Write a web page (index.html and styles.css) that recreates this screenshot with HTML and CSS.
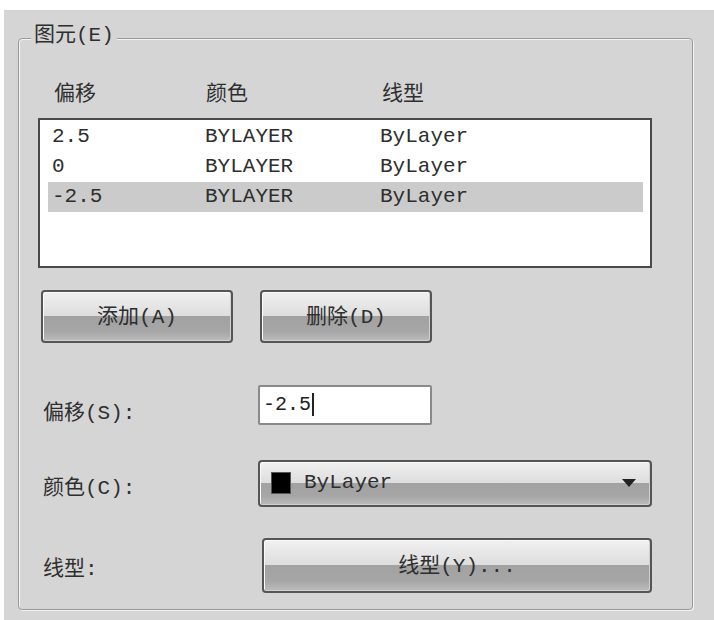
FILE: index.html
```html
<!DOCTYPE html>
<html lang="zh-CN">
<head>
<meta charset="utf-8">
<title>图元</title>
<link rel="stylesheet" href="styles.css">
</head>
<body>
<div class="page">
  <div class="dialog">
    <div class="group">
      <span class="legend">图元(E)</span>
      <div class="cols head">
        <span>偏移</span><span>颜色</span><span>线型</span>
      </div>
      <div class="listbox">
        <div class="cols row"><span>2.5</span><span>BYLAYER</span><span>ByLayer</span></div>
        <div class="cols row"><span>0</span><span>BYLAYER</span><span>ByLayer</span></div>
        <div class="cols row sel"><span>-2.5</span><span>BYLAYER</span><span>ByLayer</span></div>
      </div>
      <div class="btnrow">
        <button class="btn add">添加(A)</button>
        <button class="btn del">删除(D)</button>
      </div>
      <div class="field f-offset">
        <span class="label">偏移(S):</span>
        <div class="textbox"><span class="caret">-2.5</span></div>
      </div>
      <div class="field f-color">
        <span class="label">颜色(C):</span>
        <div class="btn combo">
          <span class="swatch"></span>
          <span class="combo-text">ByLayer</span>
          <svg class="arrow" width="14" height="8" viewBox="0 0 14 8"><path d="M0 0H14L7 8Z" fill="#222"/></svg>
        </div>
      </div>
      <div class="field f-ltype">
        <span class="label">线型:</span>
        <button class="btn ltype">线型(Y)...</button>
      </div>
    </div>
  </div>
</div>
</body>
</html>
```

FILE: styles.css
```css
html, body {
  margin: 0;
  padding: 0;
  background: #ffffff;
}
body {
  font-family: "Liberation Mono", "Noto Sans CJK SC", monospace;
  font-size: 21px;
  color: #2a2a2a;
}
.page {
  padding: 10px 0 0 4px;
}
.dialog {
  width: 710px;
  height: 610px;
  box-sizing: border-box;
  background: #d5d5d5;
  padding: 28px 0 0 14px;
}
.group {
  position: relative;
  width: 675px;
  height: 572px;
  box-sizing: border-box;
  border: 1px solid #9a9a9a;
  border-radius: 4px;
  box-shadow: inset 1px 1px 0 #f2f2f2, 1px 1px 0 #f2f2f2;
  padding: 44px 0 0 19px;
}
.legend {
  position: absolute;
  top: -15px;
  left: 12px;
  padding: 0 3px;
  line-height: 24px;
  background: #d5d5d5;
  color: #2e2e2e;
}
.cols {
  display: grid;
  grid-template-columns: 152px 176px 1fr;
  line-height: 24px;
}
.head {
  padding-left: 16px;
  height: 24px;
  color: #2e2e2e;
}
.listbox {
  margin-top: 11px;
  width: 614px;
  height: 150px;
  box-sizing: border-box;
  border: 2px solid #4a4a4a;
  background: #ffffff;
  padding: 2px 7px 0 8px;
}
.row {
  height: 30px;
  line-height: 30px;
  padding-left: 4px;
  grid-template-columns: 153px 175px 1fr;
  color: #2e2e2e;
}
.row.sel {
  background: #cbcbcb;
}
.btnrow {
  display: flex;
  gap: 27px;
  margin-top: 22px;
  padding-left: 3px;
}
.btn {
  box-sizing: border-box;
  border: 2px solid #555;
  border-radius: 4px;
  background: linear-gradient(to bottom, #f0f0f0 0%, #dedede 48%, #a2a2a2 50%, #a6a6a6 80%, #bcbcbc 100%);
  box-shadow: inset 1px 1px 0 #fafafa, inset -1px -1px 0 #d0d0d0;
  font-family: "Liberation Mono", "Noto Sans CJK SC", monospace;
  font-size: 21px;
  color: #2e2e2e;
  padding: 0 0 6px 0;
  margin: 0;
}
.add {
  width: 192px;
  height: 53px;
}
.del {
  width: 172px;
  height: 53px;
}
.field {
  display: grid;
  grid-template-columns: 220px auto;
  align-items: center;
}
.label {
  padding-left: 5px;
  color: #2e2e2e;
}
.f-offset {
  margin-top: 42px;
  height: 40px;
}
.f-offset .label {
  padding-top: 9px;
}
.textbox {
  width: 174px;
  height: 40px;
  box-sizing: border-box;
  border: 2px solid #8a8a8a;
  border-radius: 2px;
  background: #ffffff;
  padding: 3px 0 0 3px;
  font-size: 20px;
  line-height: 30px;
  color: #222;
}
.caret {
  border-right: 2px solid #222;
  padding-right: 1px;
}
.f-color {
  margin-top: 35px;
  height: 47px;
}
.f-color .label {
  padding-top: 3px;
}
.combo {
  width: 394px;
  height: 47px;
  display: flex;
  align-items: center;
  padding: 0 8px 2px 11px;
}
.swatch {
  width: 18px;
  height: 20px;
  background: #000;
  border: 1px solid #555;
}
.combo-text {
  margin-left: 13px;
  flex: 1;
  line-height: 24px;
}
.arrow {
  margin-right: 6px;
}
.f-ltype {
  margin-top: 31px;
  height: 55px;
}
.ltype {
  margin-left: 4px;
  width: 390px;
  height: 55px;
}
```
